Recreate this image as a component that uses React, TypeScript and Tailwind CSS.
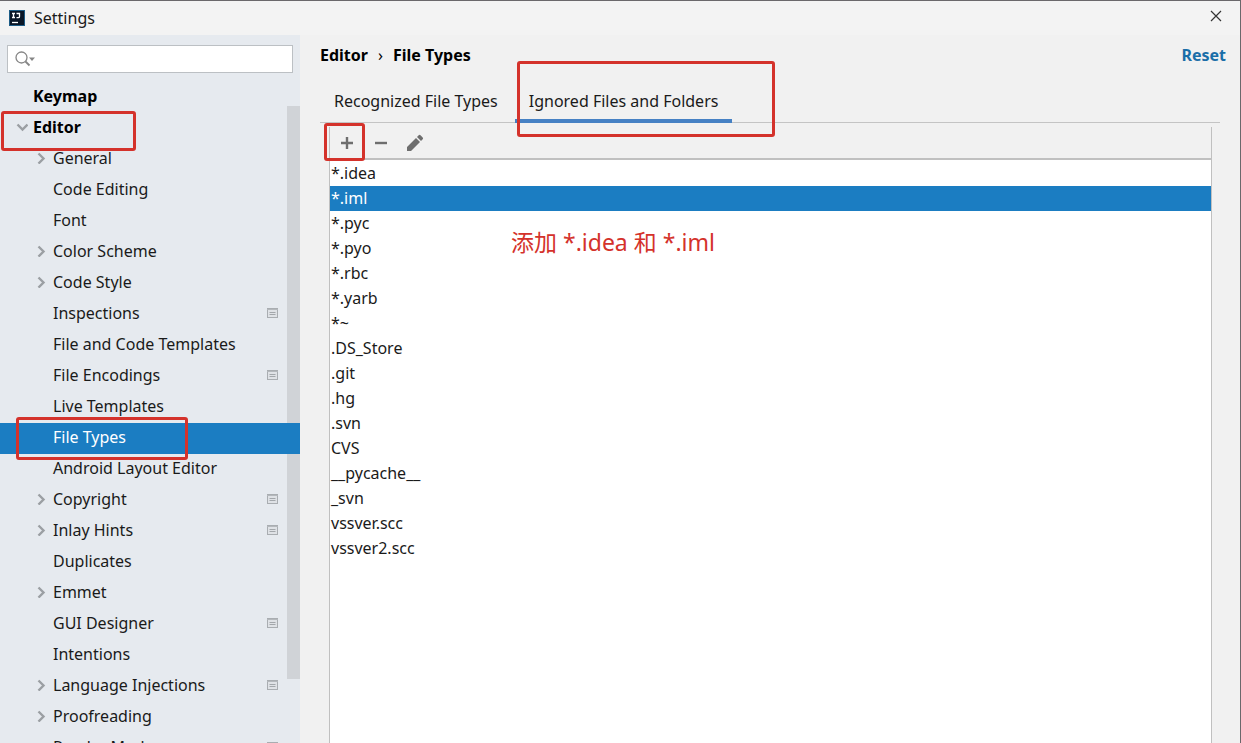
import React, { useState } from 'react';

type TreeItem = {
  label: string;
  top?: boolean;
  arrow?: 'open' | 'closed';
  project?: boolean;
};

const TREE: TreeItem[] = [
  { label: 'Keymap', top: true },
  { label: 'Editor', top: true, arrow: 'open' },
  { label: 'General', arrow: 'closed' },
  { label: 'Code Editing' },
  { label: 'Font' },
  { label: 'Color Scheme', arrow: 'closed' },
  { label: 'Code Style', arrow: 'closed' },
  { label: 'Inspections', project: true },
  { label: 'File and Code Templates' },
  { label: 'File Encodings', project: true },
  { label: 'Live Templates' },
  { label: 'File Types' },
  { label: 'Android Layout Editor' },
  { label: 'Copyright', arrow: 'closed', project: true },
  { label: 'Inlay Hints', arrow: 'closed', project: true },
  { label: 'Duplicates' },
  { label: 'Emmet', arrow: 'closed' },
  { label: 'GUI Designer', project: true },
  { label: 'Intentions' },
  { label: 'Language Injections', arrow: 'closed', project: true },
  { label: 'Proofreading', arrow: 'closed' },
  { label: 'Reader Mode', project: true },
];

const PATTERNS = [
  '*.idea',
  '*.iml',
  '*.pyc',
  '*.pyo',
  '*.rbc',
  '*.yarb',
  '*~',
  '.DS_Store',
  '.git',
  '.hg',
  '.svn',
  'CVS',
  '__pycache__',
  '_svn',
  'vssver.scc',
  'vssver2.scc',
];

const TABS = ['Recognized File Types', 'Ignored Files and Folders'];

// red marker drawn over a control
function Marker({ className }: { className: string }) {
  return <span className={`pointer-events-none absolute z-20 rounded-[3px] border-3 border-[#d4322b] ${className}`} />;
}

function Logo() {
  return (
    <svg className="h-4 w-4" viewBox="0 0 16 16" aria-hidden="true">
      <rect width="16" height="16" fill="#1d5c86" />
      <rect x="1" y="1" width="14" height="14" fill="#0a1626" />
      <path d="M3 3.500h3M4.500 3.500v4M3 7.500h3M7.500 3.500h3v3c0 .8-.5 1.200-1.300 1.200H7.500" fill="none" stroke="#fff" strokeWidth="1.300" />
      <path d="M3 12.500h6" stroke="#fff" strokeWidth="1.300" />
    </svg>
  );
}

function Chevron({ open }: { open: boolean }) {
  return (
    <svg className="h-3 w-3" viewBox="0 0 12 12" fill="none" stroke="#9b9fa3" strokeWidth="2.400" aria-hidden="true">
      <path d={open ? 'M1.500 3.500l5 5 5-5' : 'M2.500 1.500l5 5-5 5'} />
    </svg>
  );
}

function ProjectIcon() {
  return (
    <svg className="h-[10px] w-[11px]" viewBox="0 0 11 10" aria-hidden="true">
      <rect x=".5" y=".5" width="10" height="9" fill="#dfe2e6" stroke="#a9adb1" />
      <path d="M0 1.500h11" stroke="#b4b8bc" />
      <path d="M2.500 4.500h6M2.500 6.500h6" stroke="#a3a7ab" />
    </svg>
  );
}

export default function App() {
  const [query, setQuery] = useState('');
  const [page, setPage] = useState('File Types');
  const [tab, setTab] = useState(TABS[1]);
  const [pattern, setPattern] = useState('*.iml');

  return (
    <div className="flex h-screen flex-col overflow-hidden border-t border-r border-[#6a686b] bg-[#f1f1f1] font-['Noto_Sans','Noto_Sans_CJK_SC',sans-serif] text-base text-[#1a1a1a]">
      <header className="flex h-[34px] shrink-0 items-center gap-[9px] bg-[#f3f3f3] pr-[18px] pl-[9px]">
        <Logo />
        <h1 className="flex-1">Settings</h1>
        <button type="button" aria-label="Close" className="mb-1">
          <svg className="h-3 w-3" viewBox="0 0 12 12" stroke="#333" strokeWidth="1.200" aria-hidden="true">
            <path d="M1 1l10 10M11 1L1 11" />
          </svg>
        </button>
      </header>

      <div className="flex min-h-0 flex-1">
        <aside className="relative flex w-[300px] shrink-0 flex-col overflow-hidden bg-[#e6eaef]">
          <label className="mx-[7px] mt-[10px] mb-[9px] flex h-7 shrink-0 items-center border border-[#bcc0c4] bg-white pl-[7px]">
            <svg className="h-4 w-5 shrink-0" viewBox="0 0 20 16" fill="none" aria-hidden="true">
              <circle cx="6.500" cy="6.500" r="5.500" stroke="#868686" strokeWidth="1.300" />
              <path d="M10.500 10.500l4 4" stroke="#868686" strokeWidth="1.800" />
              <path d="M14 6.500h6l-3 3.500z" fill="#868686" />
            </svg>
            <input
              type="text"
              aria-label="Search settings"
              value={query}
              onChange={(e) => setQuery(e.target.value)}
              className="min-w-0 flex-1 px-1 outline-none"
            />
          </label>

          {/* scrollbar thumb, the selected row covers it */}
          <div className="pointer-events-none absolute top-[71px] right-0 h-[573px] w-[13px] bg-[#d0d3d7]" />
          <ul>
            {TREE.map(item => (
              <li key={item.label} className="relative">
                <button
                  type="button"
                  onClick={() => setPage(item.label)}
                  className={`flex h-[31px] w-full items-center pr-[22px] pb-1 text-left ${
                    item.top ? 'pl-4 font-bold text-black' : 'pl-9'
                  } ${page === item.label ? 'bg-[#1b7dc2] text-white' : ''}`}
                >
                  <span className="w-[17px] shrink-0">
                    {item.arrow && <Chevron open={item.arrow === 'open'} />}
                  </span>
                  <span className="flex-1 whitespace-nowrap">{item.label}</span>
                  {item.project && <ProjectIcon />}
                </button>
                {item.label === 'Editor' && <Marker className="-top-0.5 left-px h-10 w-[135px]" />}
                {item.label === 'File Types' && <Marker className="-top-1.5 left-4 h-[43px] w-[172px]" />}
              </li>
            ))}
          </ul>
        </aside>

        <main className="flex min-w-0 flex-1 flex-col pl-5">
          <div className="flex h-10 shrink-0 items-center justify-between pr-[14px] font-bold text-black">
            <nav aria-label="Breadcrumb" className="flex gap-[10px]">
              <span>Editor</span>
              <span className="font-normal">›</span>
              <span>File Types</span>
            </nav>
            <button type="button" className="text-[#1a6ea8]">Reset</button>
          </div>

          <div role="tablist" className="mr-5 flex h-12 shrink-0 gap-[3px] border-b border-[#c4c4c4]">
            {TABS.map(name => (
              <div key={name} className="relative flex">
                <button
                  type="button"
                  role="tab"
                  aria-selected={tab === name}
                  onClick={() => setTab(name)}
                  className={`-mb-px border-b-4 px-[14px] pt-2 whitespace-nowrap ${
                    tab === name ? 'border-[#4681c4]' : 'border-transparent'
                  }`}
                >
                  {name}
                </button>
                {name === TABS[1] && <Marker className="-top-[14px] left-0.5 h-[76px] w-[258px]" />}
              </div>
            ))}
          </div>

          <section className="mt-1 mr-7 ml-[9px] flex min-h-0 flex-1 flex-col border-x border-[#c0c0c0]">
            <div role="toolbar" aria-label="Patterns" className="flex h-[33px] shrink-0 items-center gap-4 border-b-2 border-[#c0c0c0] pl-2 text-[#6e6e6e]">
              <div className="relative flex">
                <button type="button" aria-label="Add">
                  <svg className="h-[18px] w-[18px]" viewBox="0 0 18 18" stroke="currentColor" strokeWidth="2.400" aria-hidden="true">
                    <path d="M9 3v12M3 9h12" />
                  </svg>
                </button>
                <Marker className="-top-[11px] -left-[14px] h-[38px] w-[41px]" />
              </div>
              <button type="button" aria-label="Remove">
                <svg className="h-[18px] w-[18px]" viewBox="0 0 18 18" stroke="currentColor" strokeWidth="2.400" aria-hidden="true">
                  <path d="M3 9h12" />
                </svg>
              </button>
              <button type="button" aria-label="Edit">
                <svg className="h-[18px] w-[18px]" viewBox="0 0 18 18" fill="currentColor" aria-hidden="true">
                  <path d="M1 17v-4l9-9 4 4-9 9zM11 3l1.700-1.700a1.300 1.300 0 0 1 1.800 0l2.200 2.200a1.300 1.300 0 0 1 0 1.800L15 7z" />
                </svg>
              </button>
            </div>

            <div className="relative flex-1 overflow-hidden bg-white pt-px">
              <ul role="listbox" aria-label="Ignored files and folders">
                {PATTERNS.map(p => (
                  <li
                    key={p}
                    role="option"
                    aria-selected={pattern === p}
                    onClick={() => setPattern(p)}
                    className={`h-[25px] cursor-default pl-px leading-[25px] ${pattern === p ? 'bg-[#1b7dc2] text-white' : ''}`}
                  >
                    {p}
                  </li>
                ))}
              </ul>
              <p className="absolute top-[66px] left-[181px] text-[23px] leading-8 whitespace-nowrap text-[#d4322b]">添加 *.idea 和 *.iml</p>
            </div>
          </section>
        </main>
      </div>
    </div>
  );
}
